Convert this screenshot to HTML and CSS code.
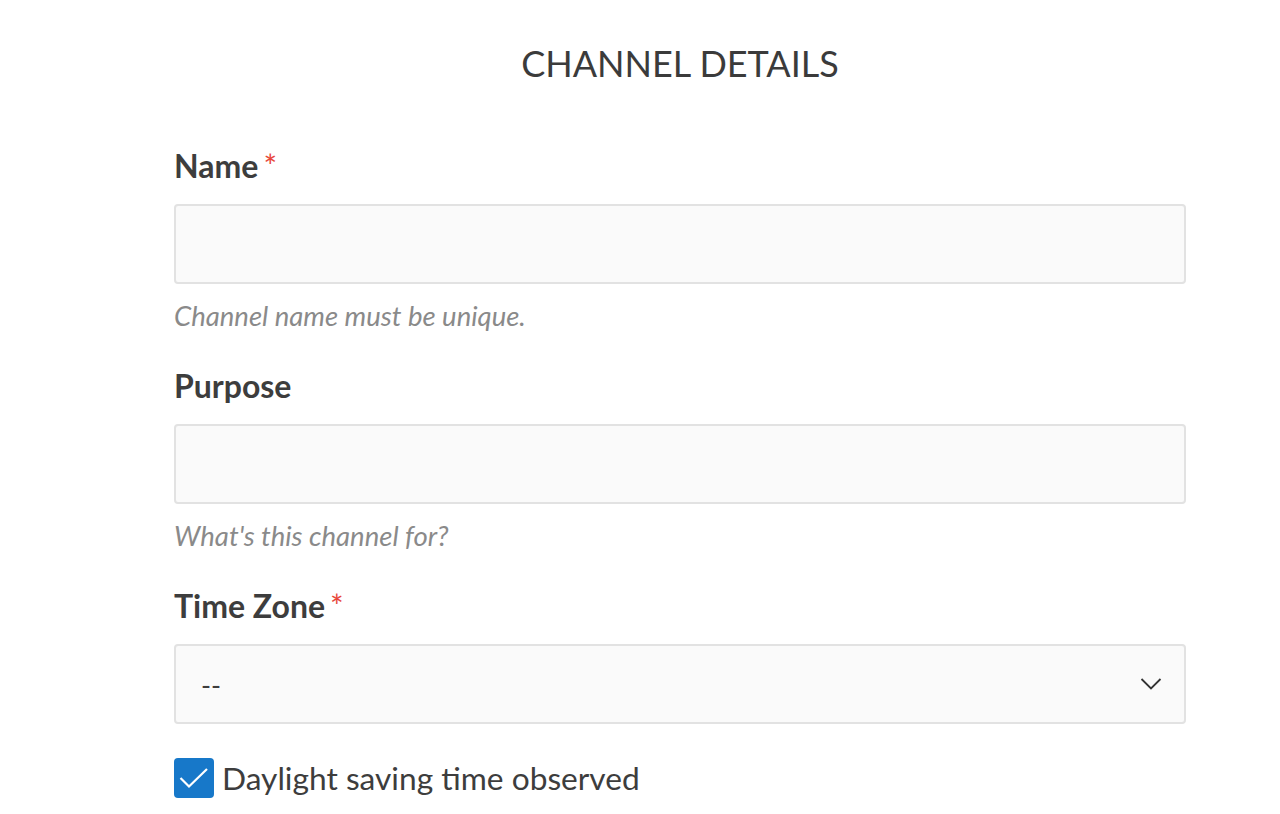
FILE: index.html
```html
<!DOCTYPE html>
<html>
<head>
<meta charset="utf-8">
<link rel="stylesheet" href="styles.css">
</head>
<body>
<div class="page">
  <h1 class="title">CHANNEL DETAILS</h1>
  <form class="form">
    <div class="field">
      <label class="label">Name<span class="req">*</span></label>
      <div class="input"></div>
      <div class="help">Channel name must be unique.</div>
    </div>
    <div class="field">
      <label class="label">Purpose</label>
      <div class="input"></div>
      <div class="help">What's this channel for?</div>
    </div>
    <div class="field">
      <label class="label">Time Zone<span class="req">*</span></label>
      <div class="input select">
        <span class="value">--</span>
        <svg class="chev" width="22" height="14" viewBox="0 0 22 14"><path d="M1.5 2 L11 11.5 L20.5 2" fill="none" stroke="#333" stroke-width="1.8"/></svg>
      </div>
    </div>
    <div class="check-row">
      <span class="box"><svg width="40" height="40" viewBox="0 0 40 40"><path d="M6.5 20 L15 28.5 L33 11" fill="none" stroke="#fff" stroke-width="2.2"/></svg></span>
      <span class="check-label">Daylight saving time observed</span>
    </div>
  </form>
</div>
</body>
</html>
```
FILE: styles.css
```css
html, body { margin: 0; padding: 0; background: #fff; }
body { font-family: Lato, "Noto Sans", sans-serif; color: #3d3d3d; }
.page { width: 1012px; margin-left: 174px; }
.title {
  margin: 0;
  padding-top: 42px;
  text-align: center;
  font-weight: 400;
  font-size: 36px;
  line-height: 42px;
  color: #3b3b3b;
}
.form { margin-top: 62px; }
.field { display: flex; flex-direction: column; }
.label { font-weight: 700; font-size: 32px; line-height: 40px; color: #3d3d3d; }
.req { color: #e8473b; font-weight: 400; font-size: 32px; margin-left: 5px; }
.input {
  margin-top: 18px;
  height: 76px;
  border: 2px solid #e2e2e2;
  border-radius: 4px;
  background: #fafafa;
}
.help { font-style: italic; font-size: 27.5px; line-height: 36px; color: #8a8a8a; margin-top: 14px; margin-bottom: 32px; }
.select { display: flex; align-items: center; justify-content: space-between; padding: 0 22px 0 25px; }
.value { font-size: 27px; color: #3d3d3d; }
.check-row { display: flex; align-items: center; margin-top: 34px; gap: 8px; }
.box { width: 40px; height: 40px; border-radius: 4px; background: #1778c9; display: block; }
.box svg { display: block; }
.check-label { font-size: 31.7px; line-height: 40px; color: #3d3d3d; }
```
